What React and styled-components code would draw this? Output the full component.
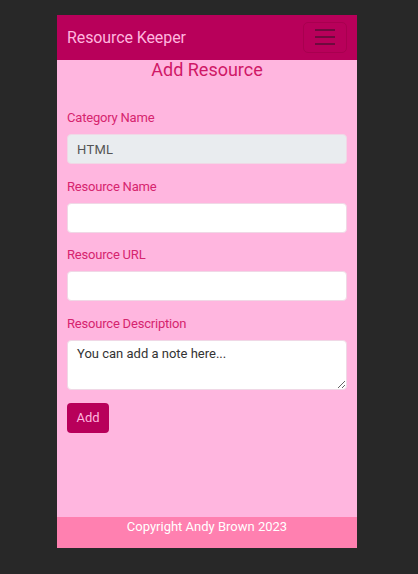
import styled, { createGlobalStyle } from 'styled-components'

const GlobalStyle = createGlobalStyle`
    body {
        margin: 0;
        background: #282828;
        font-family: Roboto, "Noto Sans", sans-serif;
    }
    * {
        box-sizing: border-box;
    }
`

const Page = styled.div`
    padding: 15px 0 0 57px;
    min-height: 574px;
`

const Panel = styled.div`
    width: 300px;
    height: 533px;
    display: flex;
    flex-direction: column;
    background: #ffb6df;
`

const NavBar = styled.header`
    height: 45px;
    background: #b8005a;
    display: flex;
    align-items: center;
    justify-content: space-between;
    padding: 0 10px;
`

const Brand = styled.div`
    color: #ffb6df;
    font-size: 16px;
    letter-spacing: -0.1px;
`

const Toggler = styled.button`
    width: 44px;
    height: 31px;
    margin-top: -1px;
    border: 1px solid #a8004f;
    border-radius: 5px;
    background: transparent;
    display: flex;
    flex-direction: column;
    align-items: center;
    justify-content: center;
    gap: 5px;
    padding: 0;
`

const Bar = styled.span`
    display: block;
    width: 20px;
    height: 2px;
    background: #6e0a3e;
`

const Main = styled.main`
    flex: 1;
    padding: 0 10px;
`

const Title = styled.h2`
    margin: 0 0 28px;
    font-size: 18px;
    font-weight: 400;
    line-height: 20px;
    text-align: center;
    color: #cf1866;
`

const Field = styled.div`
    margin-bottom: 12.7px;
`

const Label = styled.label`
    display: block;
    font-size: 13px;
    line-height: 20px;
    margin-bottom: 6px;
    color: #d6246e;
    letter-spacing: -0.2px;
`

const Input = styled.input`
    display: block;
    width: 100%;
    height: 30px;
    padding: 0 9px;
    font-family: inherit;
    font-size: 13px;
    color: #555;
    background: ${({ disabled }) => (disabled ? '#e9ecef' : '#fff')};
    border: 1px solid #f0d8e6;
    border-radius: 4px;
    letter-spacing: 0.3px;
`

const TextArea = styled.textarea`
    display: block;
    width: 100%;
    height: 50px;
    padding: 5px 9px;
    font-family: inherit;
    font-size: 13px;
    color: #333;
    background: #fff;
    border: 1px solid #f0d8e6;
    border-radius: 4px;
    resize: vertical;
    &::placeholder {
        color: #333;
    }
`

const AddButton = styled.button`
    width: 42px;
    height: 30px;
    border: none;
    border-radius: 4px;
    background: #b8005a;
    color: #ffb6df;
    font-family: inherit;
    font-size: 13px;
    padding: 0;
`

const Footer = styled.footer`
    height: 31px;
    background: #ff80b0;
    color: #fff;
    font-size: 13px;
    line-height: 20px;
    text-align: center;
`

function App() {
    return (
        <>
            <GlobalStyle />
            <Page>
                <Panel>
                    <NavBar>
                        <Brand>Resource Keeper</Brand>
                        <Toggler aria-label="menu">
                            <Bar />
                            <Bar />
                            <Bar />
                        </Toggler>
                    </NavBar>
                    <Main>
                        <Title>Add Resource</Title>
                        <Field>
                            <Label>Category Name</Label>
                            <Input disabled value="HTML" readOnly />
                        </Field>
                        <Field>
                            <Label>Resource Name</Label>
                            <Input />
                        </Field>
                        <Field>
                            <Label>Resource URL</Label>
                            <Input />
                        </Field>
                        <Field>
                            <Label>Resource Description</Label>
                            <TextArea placeholder="You can add a note here..." />
                        </Field>
                        <AddButton>Add</AddButton>
                    </Main>
                    <Footer>Copyright Andy Brown 2023</Footer>
                </Panel>
            </Page>
        </>
    )
}

export default App
